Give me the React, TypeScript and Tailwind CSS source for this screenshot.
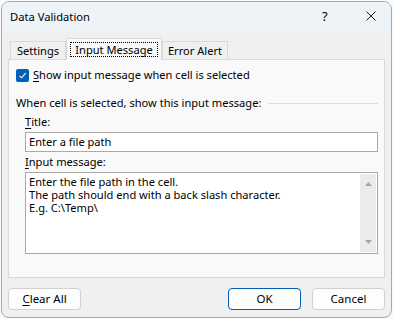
import React from 'react';

const font = { fontFamily: '"Noto Sans", "Liberation Sans", sans-serif' };

const Tab: React.FC<{ label: string; active?: boolean; w: string }> = ({ label, active, w }) =>
  active ? (
    <div className={`${w} h-[22px] -mb-px relative z-10 bg-[#f9f9f9] border border-b-0 border-[#d9d9d9] flex items-center justify-center`}>
      <span className="px-[4px] h-[15px] leading-[13px] border border-dotted border-black">{label}</span>
    </div>
  ) : (
    <div className={`${w} h-[18px] bg-[#f0f0f0] border border-b-0 border-[#d9d9d9] flex items-center justify-center leading-[16px]`}>
      {label}
    </div>
  );

const Btn: React.FC<{ children: React.ReactNode; primary?: boolean }> = ({ children, primary }) => (
  <button
    className={`w-[73px] h-[22px] rounded-[4px] bg-[#fdfdfd] border text-[11.5px] leading-[18px] text-black ${
      primary ? 'border-[#005fb8]' : 'border-[#d0d0d0]'
    }`}
  >
    {children}
  </button>
);

export default function App() {
  return (
    <div className="w-[394px] h-[319px] bg-[#fafafa] pt-px pl-px text-[11.1px] text-black" style={font}>
      <div className="w-[391px] h-[317px] rounded-[8px] border border-[#a8a8a8] bg-[#f0f0f0] overflow-hidden flex flex-col">
        {/* Title bar */}
        <div className="h-[30px] shrink-0 bg-[#eef3f8] flex items-center pl-[8px] relative">
          <span className="leading-[16px] text-[11.2px]">Data Validation</span>
          <span className="absolute left-[320px] top-[6px] text-[13px] leading-[16px]">?</span>
          <svg className="absolute left-[364px] top-[9px]" width="10" height="10" viewBox="0 0 10 10">
            <path d="M0.5 0.5 L9.5 9.5 M9.5 0.5 L0.5 9.5" stroke="#1a1a1a" strokeWidth="1" fill="none" />
          </svg>
        </div>

        {/* Body */}
        <div className="px-[6px] pt-[6px] flex flex-col">
          {/* Tabs */}
          <div className="flex items-end pl-[2px]">
            <Tab label="Settings" w="w-[56px]" />
            <Tab label="Input Message" w="w-[96px]" active />
            <Tab label="Error Alert" w="w-[66px]" />
          </div>

          {/* Panel */}
          <div className="h-[219px] bg-[#f9f9f9] border border-[#d9d9d9] pl-[7px] pr-[6px] flex flex-col">
            <div className="mt-[8px] h-[14px] flex items-center gap-[4px]">
              <div className="w-[13px] h-[13px] rounded-[2px] bg-[#005fb8] flex items-center justify-center">
                <svg width="9" height="9" viewBox="0 0 9 9">
                  <path d="M1.5 4.8 L3.6 6.8 L7.6 2.2" stroke="#fff" strokeWidth="1.1" fill="none" />
                </svg>
              </div>
              <span className="leading-[16px]">
                <span className="underline underline-offset-2">S</span>how input message when cell is selected
              </span>
            </div>

            <div className="mt-[13px] h-[16px] flex items-center gap-[7px]">
              <span className="leading-[16px] whitespace-nowrap">When cell is selected, show this input message:</span>
              <div className="flex-1 h-px bg-[#dcdcdc]" />
            </div>

            <div className="pl-[9px] flex flex-col">
              <div className="mt-[3px] h-[16px] leading-[16px]">
                <span className="underline underline-offset-2">T</span>itle:
              </div>
              <div className="mt-[2px] h-[20px] bg-white border border-[#a9a9a9] pl-[3px] leading-[18px]">
                Enter a file path
              </div>
              <div className="mt-[2px] h-[16px] leading-[16px]">
                <span className="underline underline-offset-2">I</span>nput message:
              </div>
              <div className="mt-[2px] h-[82px] bg-white border border-[#a9a9a9] flex">
                <div className="flex-1 pl-[3px] pt-[2px] leading-[13px]">
                  <div>Enter the file path in the cell.</div>
                  <div>The path should end with a back slash character.</div>
                  <div>E.g. C:\Temp\</div>
                </div>
                <div className="w-[16px] my-px mr-px bg-[#ebebeb] flex flex-col items-center justify-between py-[8px]">
                  <svg width="7" height="4" viewBox="0 0 7 4">
                    <path d="M0 4 L3.5 0 L7 4 Z" fill="#a6a6a6" />
                  </svg>
                  <svg width="7" height="4" viewBox="0 0 7 4">
                    <path d="M0 0 L3.5 4 L7 0 Z" fill="#a6a6a6" />
                  </svg>
                </div>
              </div>
            </div>
          </div>

          {/* Buttons */}
          <div className="mt-[10px] flex items-center">
            <Btn>
              <span className="underline underline-offset-2">C</span>lear All
            </Btn>
            <div className="flex-1" />
            <Btn primary>OK</Btn>
            <div className="w-[11px]" />
            <Btn>Cancel</Btn>
          </div>
        </div>
      </div>
    </div>
  );
}
